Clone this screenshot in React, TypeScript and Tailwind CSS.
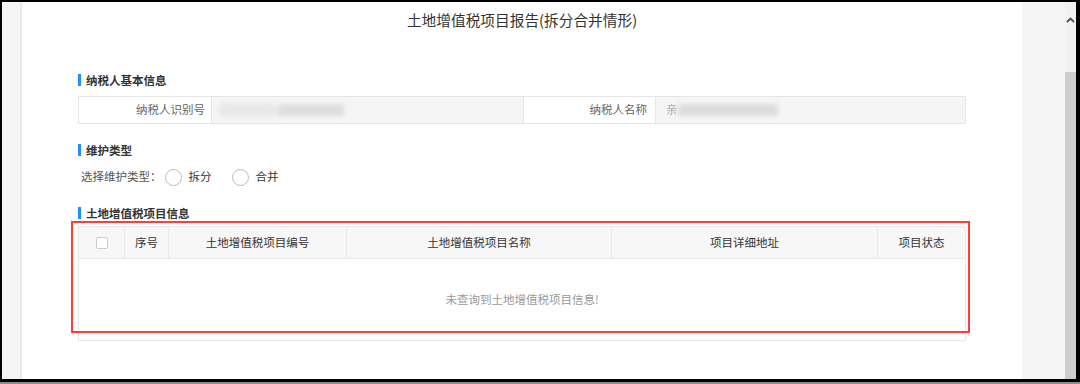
import React from 'react'

const font = "font-['Noto_Sans_CJK_SC','Noto_Sans',sans-serif]"

function SectionTitle({ text }: { text: string }) {
    return (
        <div className="flex items-center h-[16px]">
            <span className="w-[3px] h-[12px] bg-[#1e90ff]" />
            <span className="ml-[5px] text-[11.5px] font-bold text-[#333] leading-[16px]">{text}</span>
        </div>
    )
}

function Radio({ label }: { label: string }) {
    return (
        <label className="flex items-center">
            <span className="w-[17px] h-[17px] rounded-full border border-[#bdbdbd] bg-white" />
            <span className="ml-[7px] text-[11.5px] text-[#333]">{label}</span>
        </label>
    )
}

const columns = [
    { name: '序号', w: 'w-[44px]' },
    { name: '土地增值税项目编号', w: 'w-[178px]' },
    { name: '土地增值税项目名称', w: 'w-[265px]' },
    { name: '项目详细地址', w: 'w-[266px]' },
    { name: '项目状态', w: 'flex-1' },
]

export default function App() {
    return (
        <div className={`w-[1080px] h-[384px] bg-[#8c8c8c] ${font}`}>
            <div className="h-[382px] flex border-t-2 border-l-2 border-r-4 border-b-[3px] border-black">
                {/* left gutter */}
                <div className="w-[20px] shrink-0 bg-[#f5f5f5] border-r-2 border-[#ebebeb]" />

                {/* main page */}
                <div className="relative w-[1000px] shrink-0 bg-white px-[56px] pt-[6px]">
                    <h1 className="text-center text-[14.7px] leading-[24px] text-[#333] font-normal">
                        土地增值税项目报告(拆分合并情形)
                    </h1>

                    {/* taxpayer info */}
                    <div className="mt-[40px]">
                        <SectionTitle text="纳税人基本信息" />
                    </div>
                    <div className="mt-[8px] flex h-[28px] border border-[#e6e6e6] text-[11.5px]">
                        <div className="w-[132px] flex items-center justify-end pr-[6px] text-[#666] bg-white">纳税人识别号</div>
                        <div className="w-[312px] flex items-center pl-[6px] bg-[#f5f5f5] border-l border-[#e6e6e6]">
                            <span className="h-[14px] w-[60px] rounded-full bg-[#e8e8e8] blur-[2px]" />
                            <span className="h-[12px] w-[66px] bg-[#dedede] blur-[2px]" />
                        </div>
                        <div className="w-[132px] flex items-center justify-end pr-[8px] text-[#666] bg-white border-l border-[#e6e6e6]">纳税人名称</div>
                        <div className="flex-1 flex items-center pl-[10px] bg-[#f5f5f5] border-l border-[#e6e6e6]">
                            <span className="text-[#aaa] blur-[0.6px]">亲</span>
                            <span className="h-[12px] w-[100px] bg-[#dcdcdc] blur-[2px]" />
                        </div>
                    </div>

                    {/* maintenance type */}
                    <div className="mt-[18px]">
                        <SectionTitle text="维护类型" />
                    </div>
                    <div className="mt-[9px] h-[20px] flex items-center pl-[3px] text-[11.5px] text-[#555]">
                        <span>选择维护类型：</span>
                        <div className="ml-[3px]">
                            <Radio label="拆分" />
                        </div>
                        <div className="ml-[20px]">
                            <Radio label="合并" />
                        </div>
                    </div>

                    {/* project info */}
                    <div className="mt-[18px]">
                        <SectionTitle text="土地增值税项目信息" />
                    </div>
                    <div className="mt-[5px] border border-[#e8e8e8] text-[11.5px]">
                        <div className="flex h-[32px] bg-[#f7f7f7] border-b border-[#e8e8e8] text-[#333]">
                            <div className="w-[45px] flex items-center justify-center">
                                <span className="w-[12px] h-[12px] border border-[#ccc] rounded-[2px] bg-white" />
                            </div>
                            {columns.map((c) => (
                                <div key={c.name} className={`${c.w} flex items-center justify-center border-l border-[#e8e8e8]`}>
                                    {c.name}
                                </div>
                            ))}
                        </div>
                        <div className="h-[81px] flex items-center justify-center text-[#999]">
                            未查询到土地增值税项目信息!
                        </div>
                    </div>

                    {/* annotation */}
                    <div className="absolute left-[49px] top-[219px] w-[899px] h-[112px] border-2 border-[#ff3d3d]" />
                </div>

                {/* right gutter */}
                <div className="w-[43px] shrink-0 bg-[#f5f5f5]" />

                {/* scrollbar */}
                <div className="w-[11px] shrink-0 flex flex-col bg-[#f1f1f1]">
                    <div className="h-[70px] flex justify-center pt-[15px]">
                        <svg width="9" height="6" viewBox="0 0 9 6">
                            <polyline points="1,5 4.5,1.5 8,5" fill="none" stroke="#505050" strokeWidth="1.8" />
                        </svg>
                    </div>
                    <div className="flex-1 bg-[#cdcdcd]" />
                </div>
            </div>
        </div>
    )
}
